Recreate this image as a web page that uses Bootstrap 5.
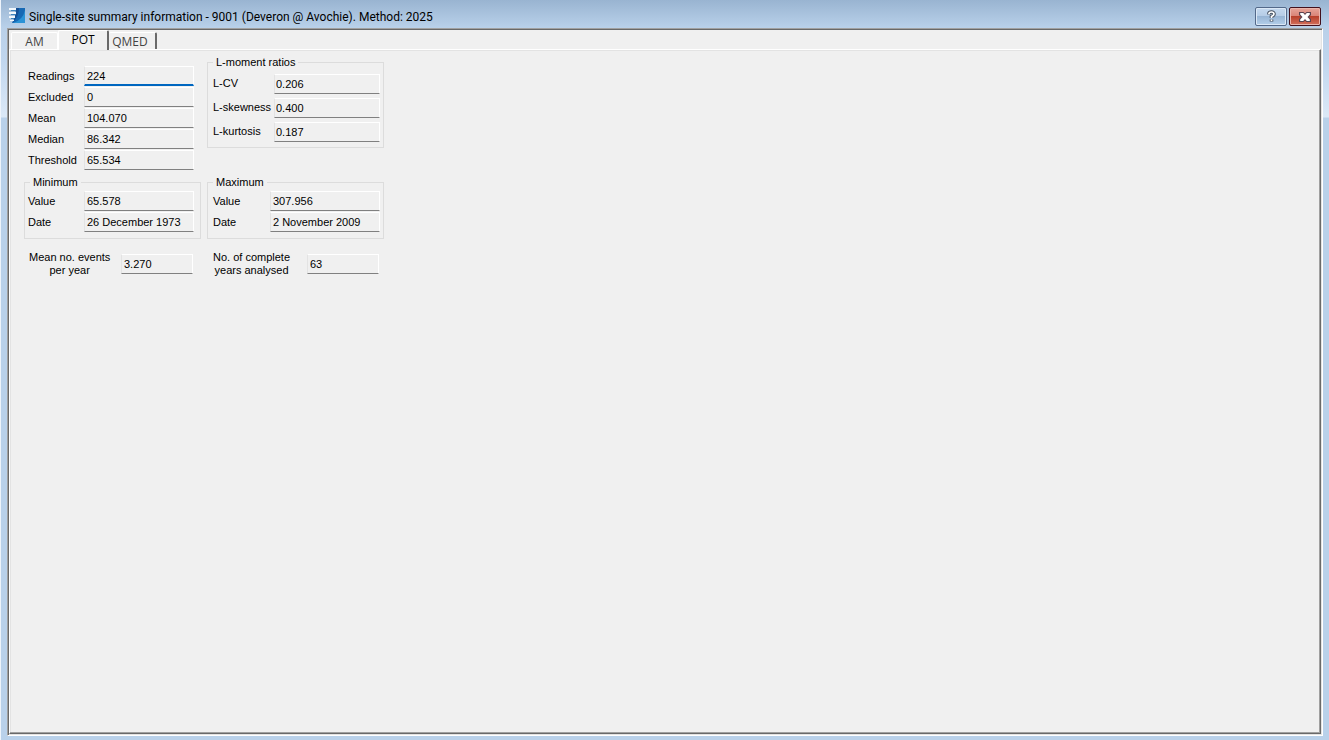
<!DOCTYPE html>
<html lang="en">
<head>
<meta charset="utf-8">
<meta name="viewport" content="width=device-width, initial-scale=1">
<title>Single-site summary information</title>
<link href="https://cdn.jsdelivr.net/npm/bootstrap@5.3.0/dist/css/bootstrap.min.css" rel="stylesheet">
<style>
  body { font: 11px/13px "Liberation Sans", Arial, sans-serif; color: #000; background: #b9d1ea; }
  .app-window { padding: 0 6px 4px 6px; border-left: 1px solid #eef4fb;
    background: linear-gradient(#b4cbe4, #c0d6ee 60px, #dce9f7 117px, #b9d1ea 118px); }
  .title-bar { height: 28px; margin: 0 -6px; padding: 3px 8px 0 7px; background: linear-gradient(#99b4d1, #b9d1ea); }
  .title-text { font: 12px/20px Roboto, "Segoe UI", sans-serif; }
  .caption-btn { width: 32px; height: 19px; border: 1px solid #53698a; border-radius: 2px;
    background: linear-gradient(#c5d9ef, #b5cce6 48%, #98b5d5 50%, #b4cfea); box-shadow: inset 0 0 0 1px #dbe8f6; }
  .caption-close { border-color: #43101c; background: linear-gradient(#e6a59a, #d98376 48%, #b8412c 50%, #d2705c);
    box-shadow: inset 0 0 0 1px #eab5ab; }
  .client { background: #f0f0f0; border: 1px solid; border-color: #a0a0a0 #fff #fff #a0a0a0; box-shadow: inset 1px 1px #696969, inset -1px -1px #e3e3e3; padding: 1px 1px 1px 1px; }
  .tab-strip { height: 19px; padding-left: 2px; font: 12px/14px "Open Sans", "Segoe UI", sans-serif; }
  .tab-btn { height: 17px; width: 47px; padding: 1px 0 0; color: #444; background: #f0f0f0; border: 1px solid #fff; border-bottom: 0; border-radius: 2px 2px 0 0; }
  .tab-last { border-right: 2px solid #696969; border-left: 0; width: 48px; padding-right: 4px; }
  .tab-btn.active { height: 20px; width: 51px; margin-bottom: -1px; padding-bottom: 2px; color: #000; border-right: 2px solid #696969; z-index: 1; }
  .tab-page { border: 1px solid; border-color: #fff #696969 #696969 #fff; box-shadow: inset -1px -1px #a0a0a0, inset 1px 1px #e3e3e3; padding: 6px 14px; }
  .summary { display: grid; grid-template-columns: 177px 177px; gap: 5px 6px; justify-content: start; align-items: start; }
  .stats { padding: 10px 7px 0 4px; }
  .field-row { height: 21px; }
  .field-row label { line-height: 20px; }
  .moments .field-row { height: 24px; }
  .moments .field-row label { line-height: 18px; }
  .value-box { height: 20px; width: 110px; min-width: 0; padding: 0 2px; font: inherit; color: #000; background: #f0f0f0; border: 1px solid; border-color: #fff #fff #808080 #e3e3e3; border-radius: 0; outline: 0; box-shadow: none; }
  .value-box.current { border-bottom: 2px solid #0067c0; }
  .moments .value-box { width: 106px; padding-left: 1px; }
  .value-box.value-short { width: 72px; }
  fieldset.group { border: 1px solid #dcdcdc; padding: 2px 3px 5px 5px; }
  fieldset.group.group-min { padding: 2px 6px 5px 3px; }
  fieldset.group legend { float: none; width: auto; margin: 0; padding: 0 3px; font-size: 11px; line-height: 13px; }
  fieldset.group.group-min legend { margin-left: 2px; }
  fieldset.group.moments { padding: 5px 3px 1px 5px; }
  .note { padding: 7px 5px 0 6px; }
  .note-min { padding-right: 8px; padding-left: 5px; }
</style>
</head>
<body>
<main class="app-window d-flex flex-column min-vh-100">
  <header class="title-bar d-flex align-items-start">
    <svg class="mt-1 me-1 flex-shrink-0" width="17" height="17" viewBox="0 0 17 17" aria-hidden="true">
      <path d="M8 1h9v15H4Q8 10 8 1z" fill="#1769b4"/>
      <path d="M17 3v13H5Q15 13 17 3z" fill="#2b93d6"/>
      <path d="M8 1h3Q11 10 5 15l-1 1Q8 10 8 1z" fill="#154f94"/>
      <path d="M1 1h7v2H1zM1 5h7v2H1zM1 9h6v2H1zM2 13h4v1H2z" fill="#f2f8fd"/>
      <path d="M3 3h5v1H3zM3 7h5v1H3zM3 11h3v1H3z" fill="#3c83bd"/>
    </svg>
    <span class="title-text flex-grow-1 mt-1">Single-site summary information - 9001 (Deveron @ Avochie). Method: 2025</span>
    <div class="d-flex ms-auto pt-1" style="gap:2px">
      <button type="button" class="caption-btn p-0 d-flex align-items-center justify-content-center" aria-label="Help">
        <svg width="11" height="13" viewBox="0 0 11 13"><path d="M3 4.500V3.200Q3.300 2 5.500 2T8 4Q8 5.300 5.500 6.500V8M5.500 9.500v2" fill="none" stroke="#46505f" stroke-width="3.600"/><path d="M3 4.200V3.200Q3.300 2 5.500 2T8 4Q8 5.300 5.500 6.500V8M5.500 9.500v1.500" fill="none" stroke="#fff" stroke-width="1.700"/></svg>
      </button>
      <button type="button" class="caption-btn caption-close p-0 d-flex align-items-center justify-content-center" aria-label="Close">
        <svg width="12" height="10" viewBox="0 0 12 10"><path d="M0 0h4.500L6 1.500 7.500 0H12v3L10 5l2 2v3H7.500L6 8.500 4.500 10H0V7l2-2-2-2z" fill="#5a4450"/><path d="M1.200 1h3L6 3l1.800-2h3v1.500L8.500 5l2.300 2.500V9h-3L6 7 4.200 9h-3V7.500L3.500 5 1.200 2.500z" fill="#fff"/></svg>
      </button>
    </div>
  </header>
  <div class="client d-flex flex-column flex-grow-1">
    <div class="tab-strip d-flex align-items-end" role="tablist">
      <button type="button" class="tab-btn" role="tab">AM</button>
      <button type="button" class="tab-btn active position-relative" role="tab" aria-selected="true">POT</button>
      <button type="button" class="tab-btn tab-last" role="tab">QMED</button>
    </div>
    <section class="tab-page flex-grow-1" role="tabpanel">
      <form class="summary">
        <div class="stats">
          <div class="field-row d-flex justify-content-between"><label for="readings">Readings</label><input class="value-box current" id="readings" value="224" readonly></div>
          <div class="field-row d-flex justify-content-between"><label for="excluded">Excluded</label><input class="value-box" id="excluded" value="0" readonly></div>
          <div class="field-row d-flex justify-content-between"><label for="mean">Mean</label><input class="value-box" id="mean" value="104.070" readonly></div>
          <div class="field-row d-flex justify-content-between"><label for="median">Median</label><input class="value-box" id="median" value="86.342" readonly></div>
          <div class="field-row d-flex justify-content-between"><label for="threshold">Threshold</label><input class="value-box" id="threshold" value="65.534" readonly></div>
        </div>
        <fieldset class="group moments">
          <legend>L-moment ratios</legend>
          <div class="field-row d-flex justify-content-between"><label for="lcv">L-CV</label><input class="value-box" id="lcv" value="0.206" readonly></div>
          <div class="field-row d-flex justify-content-between"><label for="lskew">L-skewness</label><input class="value-box" id="lskew" value="0.400" readonly></div>
          <div class="field-row d-flex justify-content-between"><label for="lkurt">L-kurtosis</label><input class="value-box" id="lkurt" value="0.187" readonly></div>
        </fieldset>
        <fieldset class="group group-min">
          <legend>Minimum</legend>
          <div class="field-row d-flex justify-content-between"><label for="minv">Value</label><input class="value-box" id="minv" value="65.578" readonly></div>
          <div class="field-row d-flex justify-content-between"><label for="mind">Date</label><input class="value-box" id="mind" value="26 December 1973" readonly></div>
        </fieldset>
        <fieldset class="group">
          <legend>Maximum</legend>
          <div class="field-row d-flex justify-content-between"><label for="maxv">Value</label><input class="value-box" id="maxv" value="307.956" readonly></div>
          <div class="field-row d-flex justify-content-between"><label for="maxd">Date</label><input class="value-box" id="maxd" value="2 November 2009" readonly></div>
        </fieldset>
        <div class="note note-min d-flex align-items-center justify-content-between"><label class="text-center" for="events">Mean no. events<br>per year</label><input class="value-box value-short" id="events" value="3.270" readonly></div>
        <div class="note d-flex align-items-center justify-content-between"><label class="text-center" for="years">No. of complete<br>years analysed</label><input class="value-box value-short" id="years" value="63" readonly></div>
      </form>
    </section>
  </div>
</main>
<script src="https://cdn.jsdelivr.net/npm/bootstrap@5.3.0/dist/js/bootstrap.bundle.min.js"></script>
</body>
</html>
